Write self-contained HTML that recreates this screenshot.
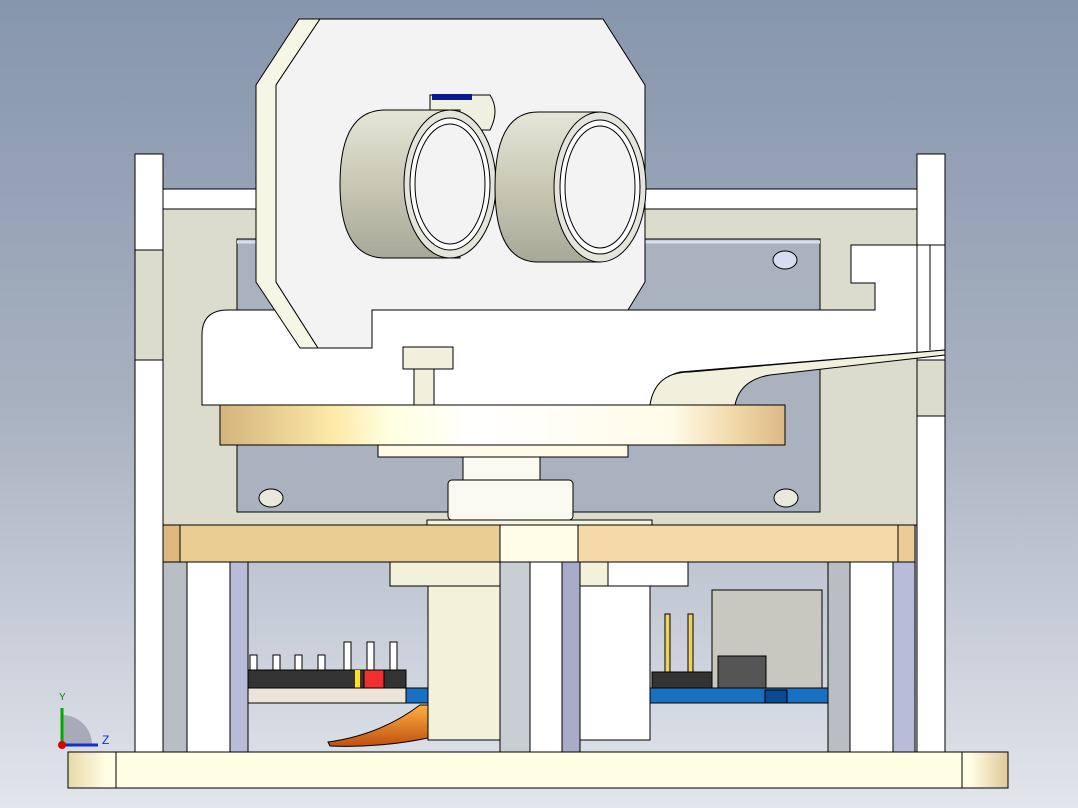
<!DOCTYPE html>
<html><head><style>html,body{margin:0;padding:0;overflow:hidden}svg{display:block}</style></head><body>
<svg width="1078" height="808" viewBox="0 0 1078 808" xmlns="http://www.w3.org/2000/svg" font-family="Liberation Sans, sans-serif">
<defs>
<linearGradient id="bg" x1="0" y1="0" x2="0" y2="1"><stop offset="0" stop-color="#8696ad"/><stop offset="0.5" stop-color="#a8b1c0"/><stop offset="1" stop-color="#e2e5ec"/></linearGradient>
<linearGradient id="disk" x1="0" x2="1"><stop offset="0" stop-color="#d4b47c"/><stop offset="0.2" stop-color="#fde9a8"/><stop offset="0.3" stop-color="#ffffe0"/><stop offset="0.45" stop-color="#fff"/><stop offset="0.8" stop-color="#fffbe8"/><stop offset="0.92" stop-color="#f0d4a4"/><stop offset="1" stop-color="#dcb986"/></linearGradient>
<linearGradient id="cyl" x1="0" y1="0" x2="0" y2="1"><stop offset="0" stop-color="#e6e6d8"/><stop offset="0.5" stop-color="#c8c8b4"/><stop offset="1" stop-color="#a8a898"/></linearGradient>
<linearGradient id="base" x1="0" x2="1"><stop offset="0" stop-color="#e8d8a8"/><stop offset="0.04" stop-color="#fffde4"/><stop offset="0.96" stop-color="#fffde4"/><stop offset="1" stop-color="#e0c898"/></linearGradient>
<linearGradient id="wire" x1="0" y1="0" x2="0" y2="1"><stop offset="0" stop-color="#ffb040"/><stop offset="1" stop-color="#c05010"/></linearGradient>
</defs>
<rect width="1078" height="808" fill="url(#bg)"/>
<g stroke="#000" stroke-width="1">
<rect x="135" y="154" width="28" height="598" fill="#fff"/>
<rect x="917" y="154" width="28" height="598" fill="#fff"/>
<rect x="135" y="250" width="28" height="110" fill="#dcdccc"/>
<rect x="917" y="360" width="28" height="56" fill="#dcdccc"/>
<rect x="163" y="189" width="754" height="20" fill="#fff"/>
<rect x="163" y="209" width="754" height="316" fill="#dcdccc"/>
<rect x="237" y="239" width="583" height="273" fill="#abb2bf"/>
<line x1="237" y1="242" x2="820" y2="242" stroke="#d8e0f0" stroke-width="3"/>
<ellipse cx="785" cy="260" rx="12" ry="9" fill="#d8dcf0"/>
<ellipse cx="271" cy="498" rx="12" ry="9" fill="#e8e8dc"/>
<ellipse cx="786" cy="498" rx="12" ry="9" fill="#e8e8dc"/>
<path d="M202,335 Q202,310 228,310 L875,310 L875,283 L851,283 L851,245 L945,245 L945,350 L680,372 Q655,378 650,405 L202,405 Z" fill="#fff"/>
<line x1="917" y1="245" x2="917" y2="352"/><line x1="930" y1="245" x2="930" y2="350"/>
<path d="M650,405 Q655,372 690,372 L945,350 L945,355 L770,375 Q740,380 735,405 Z" fill="#f0f0dc"/>
<rect x="403" y="347" width="50" height="22" fill="#f0f0dc"/>
<rect x="414" y="369" width="20" height="36" fill="#f0f0dc"/>
<path d="M299,19 L320,19 L276,85 L276,282 L318,348 L300,348 L256,282 L256,85 Z" fill="#f6f6e4"/>
<path d="M320,19 L603,19 L645,85 L645,282 L628,310 L372,310 L372,348 L318,348 L276,282 L276,85 Z" fill="#f3f3f3"/>
<path d="M430,95 L490,95 Q500,110 490,130 L430,130 Z" fill="#f0f0e0"/>
<rect x="432" y="94" width="40" height="6" fill="#0a1a90" stroke="none"/>
<path d="M385,110 L460,110 L460,258 L385,258 Q340,258 340,184 Q340,110 385,110 Z" fill="url(#cyl)"/>
<ellipse cx="450" cy="184" rx="46" ry="74" fill="#e4e4dc"/>
<ellipse cx="450" cy="184" rx="40" ry="66" fill="#fff"/>
<ellipse cx="450" cy="184" rx="35" ry="60" fill="#f3f3f3"/>
<path d="M538,112 L600,112 L600,262 L538,262 Q495,262 495,187 Q495,112 538,112 Z" fill="url(#cyl)"/>
<ellipse cx="600" cy="187" rx="46" ry="75" fill="#e4e4dc"/>
<ellipse cx="600" cy="187" rx="40" ry="67" fill="#fff"/>
<ellipse cx="600" cy="187" rx="35" ry="61" fill="#f3f3f3"/>
<rect x="220" y="405" width="565" height="40" fill="url(#disk)"/>
<rect x="378" y="445" width="250" height="12" fill="#fffbe8"/>
<rect x="463" y="457" width="77" height="23" fill="#fafaf0"/>
<rect x="448" y="480" width="125" height="40" rx="4" fill="#fafaf0"/>
<rect x="427" y="520" width="225" height="5" fill="#f4f4e0"/>
<rect x="163" y="525" width="337" height="37" fill="#eacd92"/>
<rect x="163" y="525" width="17" height="37" fill="#ddb880"/>
<rect x="500" y="525" width="78" height="37" fill="#fffde8"/>
<rect x="578" y="525" width="337" height="37" fill="#f6d9a8"/>
<rect x="898" y="525" width="17" height="37" fill="#eccb98"/>
<rect x="163" y="562" width="24" height="190" fill="#b8bec4"/>
<rect x="187" y="562" width="43" height="190" fill="#fff"/>
<rect x="230" y="562" width="18" height="190" fill="#b8bcd8"/>
<rect x="828" y="562" width="22" height="190" fill="#b8bec4"/>
<rect x="850" y="562" width="43" height="190" fill="#fff"/>
<rect x="893" y="562" width="22" height="190" fill="#b8bcd8"/>
<rect x="248" y="670" width="158" height="18" fill="#333"/>
<rect x="364" y="670" width="20" height="18" fill="#f03030"/>
<rect x="355" y="670" width="5" height="18" fill="#ffe020" stroke="none"/>
<g fill="#fff"><rect x="344" y="642" width="7" height="28"/><rect x="367" y="642" width="7" height="28"/><rect x="390" y="642" width="7" height="28"/>
<rect x="250" y="655" width="7" height="15"/><rect x="273" y="655" width="7" height="15"/><rect x="295" y="655" width="7" height="15"/><rect x="318" y="655" width="7" height="15"/></g>
<rect x="248" y="688" width="158" height="15" fill="#ece4d8"/>
<rect x="406" y="688" width="22" height="15" fill="#1a70c0"/>
<path d="M328,742 Q380,735 420,705 L428,705 L428,738 Q380,748 330,746 Z" fill="url(#wire)"/>
<rect x="390" y="562" width="110" height="24" fill="#f2f2da"/>
<rect x="428" y="586" width="72" height="154" fill="#f2f2da"/>
<rect x="500" y="562" width="30" height="190" fill="#c8cfd4"/>
<rect x="530" y="562" width="32" height="190" fill="#fff"/>
<rect x="562" y="562" width="18" height="190" fill="#a8acc8"/>
<rect x="580" y="562" width="70" height="178" fill="#fff"/>
<rect x="580" y="562" width="108" height="24" fill="#fff"/>
<rect x="580" y="562" width="28" height="24" fill="#f2f2da"/>
<rect x="712" y="590" width="110" height="98" fill="#c8c8c0"/>
<rect x="718" y="656" width="48" height="32" fill="#555"/>
<rect x="665" y="614" width="5" height="60" fill="#f0d060"/>
<rect x="688" y="614" width="5" height="60" fill="#f0d060"/>
<rect x="652" y="672" width="60" height="16" fill="#333"/>
<rect x="650" y="688" width="178" height="15" fill="#1a70c0"/>
<rect x="765" y="690" width="22" height="13" fill="#0a4a90"/>
<rect x="68" y="752" width="940" height="36" fill="url(#base)"/>
<line x1="116" y1="752" x2="116" y2="788"/><line x1="962" y1="752" x2="962" y2="788"/>
</g>
<path d="M62,745 L62,715 A30,30 0 0 1 92,745 Z" fill="#a8aab8"/>
<line x1="62" y1="745" x2="62" y2="708" stroke="#0a0" stroke-width="3"/>
<line x1="62" y1="745" x2="98" y2="745" stroke="#1030d0" stroke-width="3"/>
<circle cx="62" cy="745" r="4" fill="#d00"/>
<text x="59" y="700" font-size="10" fill="#080">Y</text>
<text x="102" y="744" font-size="12" fill="#1030d0">Z</text>
</svg>
</body></html>
